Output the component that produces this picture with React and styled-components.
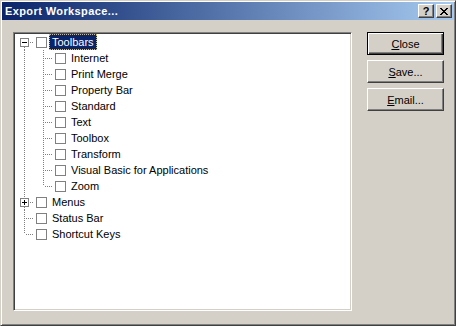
import React from "react";
import styled, { createGlobalStyle } from "styled-components";

const Global = createGlobalStyle`
  html, body { margin: 0; padding: 0; background: #d4d0c8; }
  body { font-family: "Liberation Sans", Arial, sans-serif; font-size: 11px; }
`;

const Window = styled.div`
  box-sizing: border-box;
  width: 456px;
  height: 326px;
  padding: 1px;
  background: #d4d0c8;
  border: 1px solid;
  border-color: #d4d0c8 #404040 #404040 #d4d0c8;
  box-shadow: inset 1px 1px 0 #ffffff, inset -1px -1px 0 #808080;
  display: flex;
  flex-direction: column;
`;

const TitleBar = styled.div`
  height: 18px;
  flex: none;
  display: flex;
  align-items: center;
  padding: 0 2px 0 3px;
  background: linear-gradient(to right, #0a246a, #a6caf0);
`;

const Title = styled.span`
  flex: 1;
  color: #ffffff;
  font-weight: bold;
  font-size: 11px;
  letter-spacing: 0.4px;
  white-space: nowrap;
`;

const CaptionButton = styled.span`
  box-sizing: border-box;
  width: 16px;
  height: 14px;
  margin-left: ${({ $gap }) => $gap || 0}px;
  background: #d4d0c8;
  border: 1px solid;
  border-color: #ffffff #404040 #404040 #ffffff;
  box-shadow: inset -1px -1px 0 #808080;
  display: flex;
  align-items: center;
  justify-content: center;
  color: #000000;
  font-weight: bold;
  font-size: 11px;
  line-height: 1;
`;

const Body = styled.div`
  flex: 1;
  display: flex;
  padding: 12px 0 11px 11px;
  gap: 15px;
`;

const TreeBox = styled.div`
  box-sizing: border-box;
  width: 339px;
  height: 279px;
  background: #ffffff;
  border: 1px solid;
  border-color: #808080 #ffffff #ffffff #808080;
  box-shadow: inset 1px 1px 0 #404040, inset -1px -1px 0 #d4d0c8;
  padding: 1px;
`;

const Row = styled.div`
  height: 16px;
  display: flex;
  align-items: flex-start;
`;

const dot = (dir) =>
  `repeating-linear-gradient(${dir}, #808080 0 1px, transparent 1px 2px)`;

const gutterLayers = ({ $up, $down, $right, $box }) => {
  const img = [];
  const pos = [];
  const size = [];
  if ($up) { img.push(dot("to bottom")); pos.push("9px 0"); size.push($box ? "1px 4px" : "1px 8px"); }
  if ($down) { img.push(dot("to bottom")); pos.push($box ? "9px 13px" : "9px 8px"); size.push($box ? "1px 3px" : "1px 8px"); }
  if ($right) { img.push(dot("to right")); pos.push($box ? "15px 8px" : "11px 8px"); size.push($box ? "4px 1px" : "8px 1px"); }
  if (!img.length) return "";
  return `background-image: ${img.join(", ")}; background-position: ${pos.join(", ")}; background-size: ${size.join(", ")};`;
};

const Gutter = styled.span`
  flex: none;
  width: 19px;
  height: 16px;
  background-repeat: no-repeat;
  ${gutterLayers}
`;

const ExpandBox = styled.span`
  position: relative;
  display: block;
  box-sizing: border-box;
  width: 9px;
  height: 9px;
  margin: 4px 0 0 5px;
  background: #ffffff;
  border: 1px solid #808080;

  &::before {
    content: "";
    position: absolute;
    left: 1px;
    top: 3px;
    width: 5px;
    height: 1px;
    background: #000000;
  }
  &::after {
    content: "";
    display: ${({ $open }) => ($open ? "none" : "block")};
    position: absolute;
    left: 3px;
    top: 1px;
    width: 1px;
    height: 5px;
    background: #000000;
  }
`;

const Check = styled.span`
  flex: none;
  box-sizing: border-box;
  width: 11px;
  height: 11px;
  margin: 3px 2px 0 2px;
  background: #ffffff;
  border: 1px solid #808080;
`;

const Label = styled.span`
  box-sizing: border-box;
  height: 16px;
  line-height: 14px;
  padding: 0 2px;
  white-space: nowrap;
  color: ${({ $selected }) => ($selected ? "#ffffff" : "#000000")};
  background: ${({ $selected }) => ($selected ? "#0a246a" : "transparent")};
  border: 1px ${({ $selected }) => ($selected ? "dotted #d4c07a" : "solid transparent")};
`;

const ButtonColumn = styled.div`
  display: flex;
  flex-direction: column;
  gap: 5px;
`;

const PushButton = styled.div`
  box-sizing: border-box;
  width: 77px;
  height: 23px;
  display: flex;
  align-items: center;
  justify-content: center;
  background: #d4d0c8;
  color: #000000;
  font-size: 11px;
  border: 1px solid;
  border-color: ${({ $default }) =>
    $default ? "#000000" : "#ffffff #404040 #404040 #ffffff"};
  box-shadow: ${({ $default }) =>
    $default
      ? "inset 1px 1px 0 #ffffff, inset -1px -1px 0 #404040, inset -2px -2px 0 #808080"
      : "inset -1px -1px 0 #808080, inset 1px 1px 0 #d4d0c8"};

  u { text-decoration: underline; text-underline-offset: 1px; }
`;

const tree = [
  {
    label: "Toolbars",
    open: true,
    selected: true,
    children: [
      "Internet",
      "Print Merge",
      "Property Bar",
      "Standard",
      "Text",
      "Toolbox",
      "Transform",
      "Visual Basic for Applications",
      "Zoom",
    ],
  },
  { label: "Menus", open: false, children: ["Main"] },
  { label: "Status Bar" },
  { label: "Shortcut Keys" },
];

function TreeRows() {
  const rows = [];
  tree.forEach((node, i) => {
    const first = i === 0;
    const last = i === tree.length - 1;
    const hasKids = !!node.children;
    rows.push(
      <Row key={node.label}>
        <Gutter $up={!first} $down={!last} $right $box={hasKids}>
          {hasKids && <ExpandBox $open={node.open} />}
        </Gutter>
        <Check />
        <Label $selected={node.selected}>{node.label}</Label>
      </Row>
    );
    if (hasKids && node.open) {
      node.children.forEach((child, j) => {
        const lastChild = j === node.children.length - 1;
        rows.push(
          <Row key={node.label + child}>
            <Gutter $up={!last} $down={!last} />
            <Gutter $up $down={!lastChild} $right />
            <Check />
            <Label>{child}</Label>
          </Row>
        );
      });
    }
  });
  return rows;
}

function CloseGlyph() {
  return (
    <svg width="8" height="7" viewBox="0 0 8 7" shapeRendering="crispEdges">
      <path
        d="M0 0h2v1h-2zM6 0h2v1h-2zM1 1h2v1h-2zM5 1h2v1h-2zM2 2h4v1h-4zM3 3h2v1h-2zM2 4h4v1h-4zM1 5h2v1h-2zM5 5h2v1h-2zM0 6h2v1h-2zM6 6h2v1h-2z"
        fill="#000"
      />
    </svg>
  );
}

export default function App() {
  return (
    <>
      <Global />
      <Window>
        <TitleBar>
          <Title>Export Workspace...</Title>
          <CaptionButton>?</CaptionButton>
          <CaptionButton $gap={2}>
            <CloseGlyph />
          </CaptionButton>
        </TitleBar>
        <Body>
          <TreeBox>
            <TreeRows />
          </TreeBox>
          <ButtonColumn>
            <PushButton $default>
              <span><u>C</u>lose</span>
            </PushButton>
            <PushButton>
              <span><u>S</u>ave...</span>
            </PushButton>
            <PushButton>
              <span><u>E</u>mail...</span>
            </PushButton>
          </ButtonColumn>
        </Body>
      </Window>
    </>
  );
}
